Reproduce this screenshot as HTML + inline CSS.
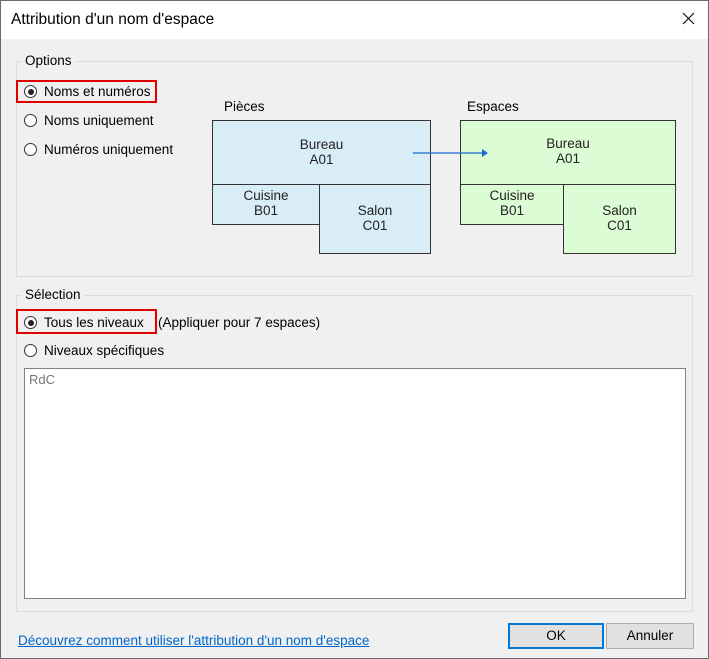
<!DOCTYPE html>
<html><head><meta charset="utf-8"><style>
*{box-sizing:border-box;margin:0;padding:0}
body{width:709px;height:659px;background:#fff;font-family:"Liberation Sans",sans-serif;font-size:13.5px;color:#000;position:relative;overflow:hidden}
.win{position:absolute;left:0;top:0;width:709px;height:659px;border:1px solid #6a6a6a;background:#f0f0f0}
.title{position:absolute;left:1px;top:1px;width:707px;height:38px;background:#fff;font-size:15.5px}
.a{position:absolute;white-space:nowrap}
.grp{position:absolute;border:1px solid #dcdcdc}
.lg{position:absolute;background:#f0f0f0;padding:0 3px;top:-9px;left:5px}
.radio{position:absolute;width:13px;height:13px;border:1px solid #333;border-radius:50%;background:#fff}
.radio.on::after{content:"";position:absolute;left:2.5px;top:2.5px;width:6px;height:6px;border-radius:50%;background:#222}
.red{position:absolute;border:2px solid #e00000}
.bx{position:absolute;border:1px solid #333;text-align:center;line-height:15px;color:#222}
.b{background:#d8edf6}.g{background:#dcfcd6}
.btn{position:absolute;background:#e1e1e1;border:1px solid #adadad;text-align:center;line-height:23px}
</style></head><body>
<div class="win"></div>
<div class="title"><span class="a" style="left:10px;top:10px">Attribution d'un nom d'espace</span>
<svg class="a" style="left:681px;top:11px" width="13" height="13"><path d="M1 1L12 12M12 1L1 12" stroke="#111" stroke-width="1.2"/></svg></div>

<div class="grp" style="left:16px;top:61px;width:677px;height:216px"><span class="lg">Options</span></div>
<div class="red" style="left:16px;top:80px;width:141px;height:23px"></div>
<div class="radio on" style="left:24px;top:85px"></div><span class="a" style="left:44px;top:84px">Noms et numéros</span>
<div class="radio" style="left:24px;top:114px"></div><span class="a" style="left:44px;top:113px">Noms uniquement</span>
<div class="radio" style="left:24px;top:143px"></div><span class="a" style="left:44px;top:142px">Numéros uniquement</span>

<span class="a" style="left:224px;top:99px">Pièces</span>
<div class="bx b" style="left:212px;top:120px;width:219px;height:65px;padding-top:16px">Bureau<br>A01</div>
<div class="bx b" style="left:212px;top:184px;width:108px;height:41px;padding-top:3px">Cuisine<br>B01</div>
<div class="bx b" style="left:319px;top:184px;width:112px;height:70px;padding-top:18px">Salon<br>C01</div>

<span class="a" style="left:467px;top:99px">Espaces</span>
<div class="bx g" style="left:460px;top:120px;width:216px;height:65px;padding-top:15px">Bureau<br>A01</div>
<div class="bx g" style="left:460px;top:184px;width:104px;height:41px;padding-top:3px">Cuisine<br>B01</div>
<div class="bx g" style="left:563px;top:184px;width:113px;height:70px;padding-top:18px">Salon<br>C01</div>
<svg class="a" style="left:410px;top:147px" width="80" height="12"><path d="M3 6H74" stroke="#1a6ad0" stroke-width="1.3"/><path d="M72 2L78 6L72 10Z" fill="#1a6ad0"/></svg>

<div class="grp" style="left:16px;top:295px;width:677px;height:317px"><span class="lg">Sélection</span></div>
<div class="red" style="left:16px;top:309px;width:141px;height:25px"></div>
<div class="radio on" style="left:24px;top:316px"></div><span class="a" style="left:44px;top:315px">Tous les niveaux</span>
<span class="a" style="left:158px;top:315px">(Appliquer pour 7 espaces)</span>
<div class="radio" style="left:24px;top:344px"></div><span class="a" style="left:44px;top:343px">Niveaux spécifiques</span>
<div class="a" style="left:24px;top:368px;width:662px;height:231px;background:#fff;border:1px solid #828282"><span class="a" style="left:4px;top:3px;color:#777;font-size:13px">RdC</span></div>

<span class="a" style="left:18px;top:633px;color:#0066cc;text-decoration:underline">Découvrez comment utiliser l'attribution d'un nom d'espace</span>
<div class="btn" style="left:508px;top:623px;width:96px;height:26px;border:2px solid #0078d7;line-height:22px">OK</div>
<div class="btn" style="left:606px;top:623px;width:88px;height:26px">Annuler</div>
</body></html>
